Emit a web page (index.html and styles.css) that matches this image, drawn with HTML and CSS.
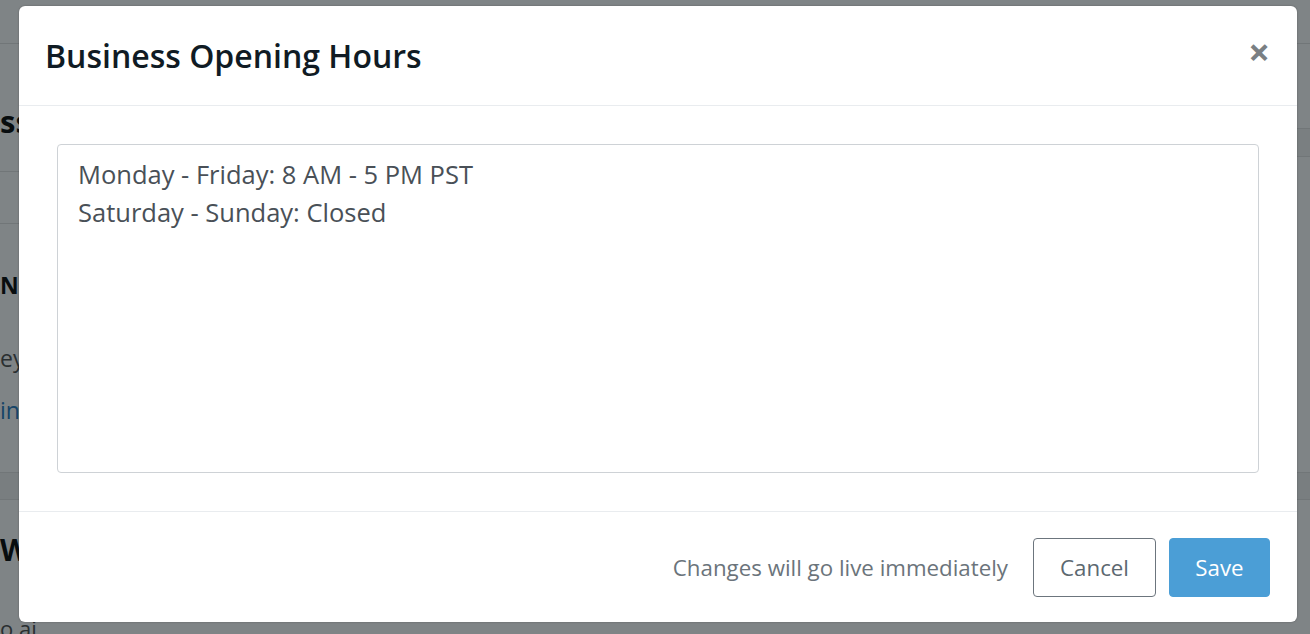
FILE: index.html
```html
<!DOCTYPE html>
<html>
<head>
<meta charset="utf-8">
<link rel="stylesheet" href="styles.css">
</head>
<body>
<div class="page">
  <div class="pg-top"></div>
  <div class="pg-cols">
    <div class="pg-left">
      <div class="pl-title"><span class="frag-h1">ss</span></div>
      <div class="pl-gap"></div>
      <div class="pl-sec">
        <div class="frag-h2">N</div>
        <div class="frag-p">ey</div>
        <div class="frag-link">in</div>
      </div>
    </div>
    <div class="pg-right">
      <div class="pr-a"></div>
      <div class="pr-b"></div>
      <div class="pr-c"></div>
    </div>
  </div>
  <div class="pg-band"></div>
  <div class="pg-sec2">
    <div class="frag-h3">W</div>
    <div class="frag-p2">o.ai</div>
  </div>
</div>
<div class="overlay"></div>
<div class="modal">
  <div class="modal-header">
    <h1 class="modal-title">Business Opening Hours</h1>
    <span class="close">&times;</span>
  </div>
  <div class="modal-body">
    <div class="textarea">Monday - Friday: 8 AM - 5 PM PST<br>Saturday - Sunday: Closed</div>
  </div>
  <div class="modal-footer">
    <span class="note">Changes will go live immediately</span>
    <button class="btn btn-cancel">Cancel</button>
    <button class="btn btn-save">Save</button>
  </div>
</div>
</body>
</html>
```
FILE: styles.css
```css
html, body { margin: 0; padding: 0; }
body {
  width: 1310px; height: 634px; overflow: hidden;
  font-family: "Open Sans", "Noto Sans", sans-serif;
  background: #fff; position: relative;
}
.page { width: 1310px; }
.pg-top { height: 43px; border-bottom: 1px solid #e2e2e2; }
.pg-cols { display: flex; height: 428px; }
.pg-left { width: 655px; }
.pg-right { width: 655px; }
.pl-title { height: 128px; border-bottom: 1px solid #e2e2e2; box-sizing: border-box; padding-top: 61px; }
.frag-h1 { font-size: 31px; font-weight: 700; color: #111; line-height: 32px; }
.pl-gap { height: 51px; border-bottom: 1px solid #e2e2e2; }
.pl-sec { padding-top: 46px; }
.frag-h2 { font-size: 23px; font-weight: 700; color: #111; line-height: 30px; }
.frag-p { font-size: 23px; color: #555; line-height: 30px; margin-top: 43px; }
.frag-link { font-size: 23px; color: #2f7fc1; line-height: 30px; margin-top: 22px; }
.pr-a { height: 84px; border-bottom: 1px solid #e2e2e2; }
.pr-b { height: 27px; border-bottom: 1px solid #e2e2e2; background: #f4f4f4; }
.pg-band { height: 26px; background: #f2f2f2; border-top: 1px solid #e2e2e2; border-bottom: 1px solid #e2e2e2; }
.pg-sec2 { padding-top: 33px; }
.frag-h3 { font-size: 30px; font-weight: 700; color: #111; line-height: 34px; }
.frag-p2 { font-size: 22px; color: #555; line-height: 30px; margin-top: 46px; }
.overlay { position: absolute; inset: 0; background: rgba(0, 9, 14, 0.5); }
.modal {
  position: absolute; left: 19px; top: 6px; width: 1278px; height: 616px;
  background: #fff; border-radius: 6px; display: flex; flex-direction: column;
  box-shadow: 0 0 2px rgba(0,0,0,0.3);
}
.modal-header {
  height: 100px; border-bottom: 1px solid #e9ecef; box-sizing: border-box;
  display: flex; align-items: center; justify-content: space-between;
  padding: 0 27px 0 26px;
}
.modal-title { margin: 0; font-size: 32px; font-weight: 600; color: #101b24; }
.close { font-size: 38px; font-weight: 700; color: #7a7f83; line-height: 1; margin-top: -10px; }
.modal-body { padding: 38px; border-bottom: 1px solid #e9ecef; }
.textarea {
  height: 329px; box-sizing: border-box; border: 1px solid #ced2d6; border-radius: 4px;
  padding: 10px 20px; font-size: 25.5px; line-height: 38px; color: #495057;
}
.modal-footer {
  flex: 1; display: flex; align-items: center; justify-content: flex-end;
  padding: 0 27px; gap: 13px;
}
.note { font-size: 22.3px; color: #6b747b; margin-right: 12px; }
.btn {
  font-family: inherit; font-size: 22.3px; height: 59px; border-radius: 4px; cursor: pointer;
}
.btn-cancel { width: 123px; background: #fff; color: #5c6870; border: 1px solid #6c757d; }
.btn-save { width: 101px; background: #4b9ed6; color: #fff; border: 1px solid #4b9ed6; }
```
